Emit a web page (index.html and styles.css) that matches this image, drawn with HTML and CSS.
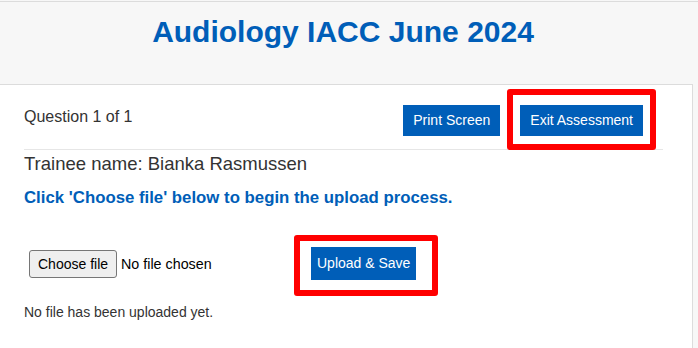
FILE: index.html
```html
<!DOCTYPE html>
<html lang="en">
<head>
    <meta charset="UTF-8" />
    <meta content="width=device-width, initial-scale=1.0" name="viewport" />
    <title>Audiology IACC June 2024</title>
    <link rel="stylesheet" href="styles.css">
</head>
<body>

<header class="header">
    <h1>Audiology IACC June 2024</h1>
</header>

<main class="panel">
    <!-- Question bar -->
    <div class="question-bar">
        <p class="question-count">Question 1 of 1</p>
        <div class="actions">
            <button class="btn" id="printBtn">Print Screen</button>
            <span class="marked marked-exit">
                <button class="btn" id="exitBtn">Exit Assessment</button>
            </span>
        </div>
    </div>

    <h2 class="trainee">Trainee name: Bianka Rasmussen</h2>
    <p class="instruction">Click 'Choose file' below to begin the upload process.</p>

    <!-- Upload section -->
    <div class="upload-row">
        <div class="file-picker">
            <button class="file-btn" id="chooseBtn">Choose file</button>
            <span class="file-name" id="fileName">No file chosen</span>
        </div>
        <span class="marked marked-upload">
            <button class="btn" id="uploadBtn">Upload &amp; Save</button>
        </span>
    </div>

    <p class="upload-status">No file has been uploaded yet.</p>
</main>

</body>
</html>
```

FILE: styles.css
```css
* {
    box-sizing: border-box;
    margin: 0;
    padding: 0;
    font-family: 'Liberation Sans', Arial, sans-serif;
}

body {
    background: #f7f7f7;
    color: #333;
    padding-top: 1px;
}

.header {
    border-top: 1px solid #dcdcdc;
    padding: 13px 12px 35px 0;
    text-align: center;
}

.header h1 {
    color: #005eb8;
    font-size: 30px;
    line-height: 34px;
    font-weight: bold;
}

.panel {
    background: #fff;
    border: 1px solid #dcdcdc;
    border-left: 0;
    width: 693px;
    min-height: 300px;
    padding: 20px 29px 0 24px;
}

.question-bar {
    display: flex;
    justify-content: space-between;
    align-items: flex-start;
    border-bottom: 1px solid #e6e6e6;
    padding-bottom: 13px;
}

.question-count {
    font-size: 16px;
    line-height: 18px;
    margin-top: 3px;
}

.actions {
    display: flex;
    gap: 20px;
    padding-right: 20px;
}

.btn {
    background: #005eb8;
    color: #fff;
    border: none;
    font-size: 14px;
    line-height: 17px;
    padding: 7px 10px;
    cursor: pointer;
}

#uploadBtn {
    padding: 8px 6px;
}

/* red annotation boxes drawn over the buttons */
.marked {
    position: relative;
    display: inline-flex;
}

.marked::after {
    content: '';
    position: absolute;
    border: 6px solid #ff0000;
    border-radius: 3px;
}

.marked-exit::after {
    left: -13px;
    right: -13px;
    top: -16px;
    bottom: -14px;
}

.marked-upload::after {
    left: -17px;
    right: -22px;
    top: -12px;
    bottom: -16px;
}

.trainee {
    font-size: 18.5px;
    font-weight: normal;
    line-height: 21px;
    margin-top: 3px;
}

.instruction {
    color: #005eb8;
    font-size: 16.8px;
    font-weight: bold;
    line-height: 20px;
    margin-top: 14px;
}

.upload-row {
    display: flex;
    align-items: center;
    margin-top: 39px;
}

.file-picker {
    display: flex;
    align-items: center;
    width: 287px;
    padding-left: 5px;
}

.file-btn {
    background: #efefef;
    border: 1px solid #767676;
    border-radius: 3px;
    color: #000;
    font-size: 14px;
    line-height: 16px;
    padding: 5px 8px;
    cursor: pointer;
}

.file-name {
    font-size: 14.3px;
    color: #000;
    margin-left: 4px;
}

.upload-status {
    font-size: 14px;
    line-height: 16px;
    margin-top: 24px;
}
```
